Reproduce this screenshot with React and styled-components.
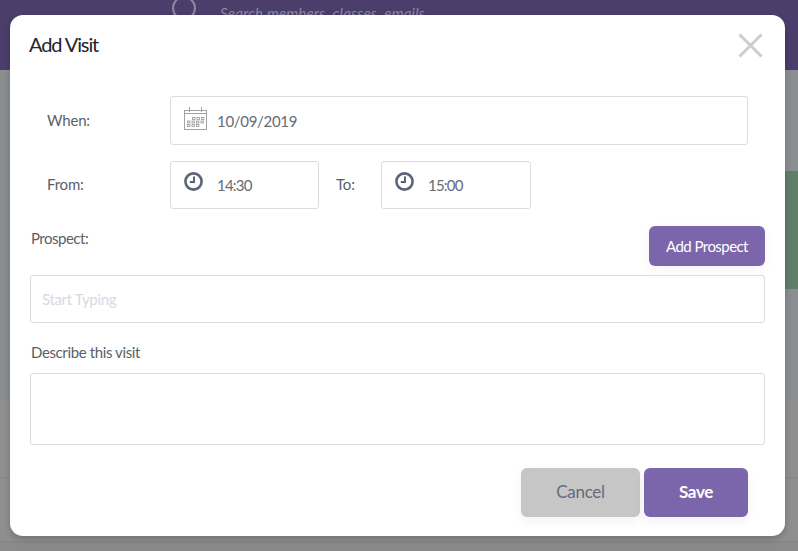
import React from 'react';
import styled, { createGlobalStyle } from 'styled-components';

const GlobalStyle = createGlobalStyle`
  html, body {
    margin: 0;
    padding: 0;
    height: 100%;
    overflow: hidden;
    background: #8f8f8f;
    font-family: "Lato", "Open Sans", sans-serif;
  }
  * {
    box-sizing: border-box;
  }
`;

const Page = styled.div`
  position: relative;
  width: 798px;
  height: 551px;
  overflow: hidden;
  display: flex;
  flex-direction: column;
`;

const TopBar = styled.header`
  height: 70px;
  flex: none;
  background: #4b3e6b;
  display: flex;
  align-items: flex-start;
  padding: 0 0 0 172px;
  gap: 24px;
`;

const SearchCircle = styled.div`
  width: 24px;
  height: 24px;
  margin-top: -4px;
  border: 2px solid #8d88a0;
  border-radius: 50%;
`;

const SearchHint = styled.span`
  margin-top: 4px;
  font-size: 15px;
  font-style: italic;
  color: #8d88a0;
  letter-spacing: 0.2px;
`;

const BackPanel = styled.div`
  height: 330px;
  flex: none;
  background: #8b8e90;
  display: flex;
  flex-direction: column;
  align-items: flex-end;
  padding-top: 101px;
`;

const GreenStrip = styled.div`
  width: 40px;
  height: 118px;
  background: #5f7f68;
`;

const BackRow = styled.div`
  height: ${(p) => p.$h}px;
  flex: none;
  background: #8f8f8f;
  border-bottom: 1px solid #858585;
`;

const BackFooter = styled.div`
  flex: 1;
  background: #8a8a8a;
`;

const Modal = styled.div`
  position: absolute;
  left: 10px;
  top: 15px;
  width: 775px;
  height: 521px;
  background: #fff;
  border-radius: 13px;
  box-shadow: 0 3px 7px rgba(0, 0, 0, 0.2);
  display: flex;
  flex-direction: column;
  padding: 0 20px;
`;

const ModalHead = styled.div`
  height: 60px;
  flex: none;
  display: flex;
  justify-content: space-between;
  align-items: center;
  padding-right: 2px;
`;

const Title = styled.h2`
  margin: -2px 0 0 -1px;
  font-size: 20px;
  font-weight: 400;
  color: #22252b;
  letter-spacing: -1.1px;
`;

const CloseButton = styled.button`
  border: 0;
  padding: 0;
  background: none;
  display: flex;
`;

const FieldRow = styled.div`
  display: flex;
  align-items: center;
  height: ${(p) => p.$h}px;
  margin-top: ${(p) => p.$top}px;
  padding-left: 17px;
`;

const InlineLabel = styled.label`
  width: ${(p) => p.$w}px;
  padding: 0 0 2px ${(p) => p.$indent || 0}px;
  flex: none;
  font-size: 15px;
  color: #5a5f69;
  letter-spacing: -0.2px;
`;

const InputBox = styled.div`
  width: ${(p) => p.$w}px;
  height: 100%;
  flex: none;
  display: flex;
  align-items: flex-start;
  gap: ${(p) => p.$gap}px;
  padding: 10px 13px 0;
  border: 1px solid #dcdcdf;
  border-radius: 3px;
  background: #fff;
`;

const BoxText = styled.span`
  font-size: 15px;
  line-height: 28px;
  color: #666b75;
  letter-spacing: ${(p) => p.$spacing}px;
  margin-top: ${(p) => p.$lift || 0}px;
`;

const ProspectRow = styled.div`
  display: flex;
  justify-content: space-between;
  align-items: flex-start;
  height: 40px;
  margin-top: 17px;
`;

const BlockLabel = styled.label`
  display: block;
  margin-left: 1px;
  font-size: 15px;
  line-height: 24px;
  color: #5a5f69;
  letter-spacing: -0.5px;
`;

const AddButton = styled.button`
  width: 116px;
  height: 40px;
  border: 0;
  border-radius: 6px;
  background: #7b66ab;
  color: #fff;
  font: inherit;
  font-size: 15px;
  letter-spacing: -0.55px;
  box-shadow: 0 4px 10px rgba(123, 102, 171, 0.08);
`;

const TextInput = styled.input`
  display: block;
  width: 100%;
  height: 48px;
  margin-top: 9px;
  padding: 0 11px;
  border: 1px solid #dcdcdf;
  border-radius: 3px;
  font: inherit;
  font-size: 15px;
  letter-spacing: -0.35px;
  outline: none;
  &::placeholder {
    color: #d5dae2;
    opacity: 1;
  }
`;

const DescribeLabel = styled(BlockLabel)`
  margin-top: 17px;
  letter-spacing: -0.38px;
`;

const TextArea = styled.textarea`
  display: block;
  width: 100%;
  height: 72px;
  margin-top: 9px;
  border: 1px solid #dcdcdf;
  border-radius: 3px;
  resize: none;
  outline: none;
`;

const Actions = styled.div`
  display: flex;
  justify-content: flex-end;
  gap: 4px;
  margin-top: 23px;
  padding-right: 17px;
`;

const ActionButton = styled.button`
  width: ${(p) => p.$w}px;
  height: 49px;
  padding: 0 0 2px;
  border: 0;
  border-radius: 6px;
  background: ${(p) => (p.$primary ? '#7b66ab' : '#c6c6c6')};
  color: ${(p) => (p.$primary ? '#fff' : '#646c7c')};
  font: inherit;
  font-size: 17px;
  font-weight: ${(p) => (p.$primary ? 700 : 400)};
  letter-spacing: -0.3px;
  box-shadow: 0 4px 10px rgba(90, 90, 140, 0.08);
`;

const Glyph = styled.svg`
  flex: none;
  fill: none;
`;

function CalendarIcon() {
  const cells = [
    [8.5, 10.5], [13, 10.5], [17.5, 10.5],
    [3.5, 14], [8, 14], [12.5, 14], [17, 14],
    [3.5, 17.5], [8, 17.5], [12.5, 17.5],
  ];
  return (
    <Glyph width="23" height="23" viewBox="0 0 23 23" stroke="#a2a2a6">
      <rect x="0.5" y="3.5" width="22" height="19" />
      <path d="M0.5 6.5h22M5.5 0v5M17.5 0v5" />
      {cells.map(([x, y]) => (
        <rect key={`${x}-${y}`} x={x} y={y} width="2.4" height="2" strokeWidth="0.9" />
      ))}
    </Glyph>
  );
}

function ClockIcon() {
  return (
    <Glyph width="19" height="19" viewBox="0 0 19 19" stroke="#5b6478">
      <circle cx="9.5" cy="9.5" r="8.1" strokeWidth="2.6" />
      <path d="M10 4.5v5.6H5.8" strokeWidth="2" />
    </Glyph>
  );
}

function CloseIcon() {
  return (
    <svg width="25" height="25" viewBox="0 0 25 25" fill="none" stroke="#cdcdcd" strokeWidth="3">
      <path d="M1.5 1.5l22 22M23.5 1.5l-22 22" />
    </svg>
  );
}

export default function App() {
  return (
    <>
      <GlobalStyle />
      <Page>
        <TopBar>
          <SearchCircle />
          <SearchHint>Search members, classes, emails</SearchHint>
        </TopBar>
        <BackPanel>
          <GreenStrip />
        </BackPanel>
        <BackRow $h={78} />
        <BackRow $h={64} />
        <BackFooter />

        <Modal>
          <ModalHead>
            <Title>Add Visit</Title>
            <CloseButton>
              <CloseIcon />
            </CloseButton>
          </ModalHead>

          <FieldRow $h={49} $top={21}>
            <InlineLabel $w={123}>When:</InlineLabel>
            <InputBox $w={578} $gap={10}>
              <CalendarIcon />
              <BoxText $spacing={-0.3}>10/09/2019</BoxText>
            </InputBox>
          </FieldRow>

          <FieldRow $h={48} $top={16}>
            <InlineLabel $w={123}>From:</InlineLabel>
            <InputBox $w={149} $gap={14}>
              <ClockIcon />
              <BoxText $spacing={-0.8} $lift={-1}>14:30</BoxText>
            </InputBox>
            <InlineLabel $w={62} $indent={17}>To:</InlineLabel>
            <InputBox $w={150} $gap={14}>
              <ClockIcon />
              <BoxText $spacing={-0.8} $lift={-1}>15:00</BoxText>
            </InputBox>
          </FieldRow>

          <ProspectRow>
            <BlockLabel>Prospect:</BlockLabel>
            <AddButton>Add Prospect</AddButton>
          </ProspectRow>
          <TextInput placeholder="Start Typing" />

          <DescribeLabel>Describe this visit</DescribeLabel>
          <TextArea />

          <Actions>
            <ActionButton $w={119}>Cancel</ActionButton>
            <ActionButton $w={104} $primary>Save</ActionButton>
          </Actions>
        </Modal>
      </Page>
    </>
  );
}
